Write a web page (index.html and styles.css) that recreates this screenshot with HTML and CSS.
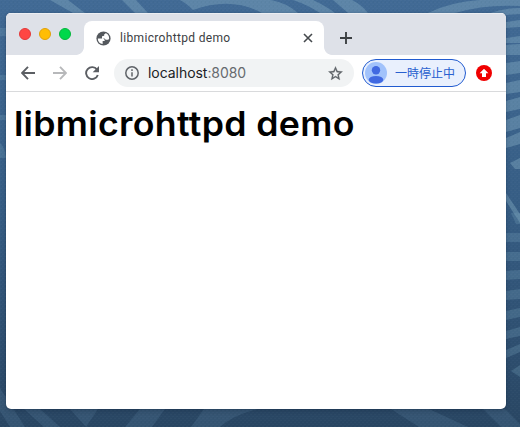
FILE: index.html
```html
<!DOCTYPE html>
<html lang="ja">
<head>
<meta charset="utf-8">
<title>libmicrohttpd demo</title>
<link rel="stylesheet" href="styles.css">
</head>
<body>
<svg class="wallpaper" viewBox="0 0 520 427" aria-hidden="true">
  <defs>
    <linearGradient id="sea" x1="0" y1="0" x2="0" y2="1">
      <stop offset="0" stop-color="#416a95"/><stop offset=".5" stop-color="#365d84"/><stop offset="1" stop-color="#294663"/>
    </linearGradient>
    <pattern id="weave" width="4" height="4" patternUnits="userSpaceOnUse">
      <path d="M0 .5h2M2 2.5h2" stroke="#fff" stroke-opacity=".02"/>
      <path d="M1.5 1v2" stroke="#00122a" stroke-opacity=".03"/>
    </pattern>
  </defs>
  <rect width="520" height="427" fill="url(#sea)"/>
  <g fill="#82a9c0" fill-opacity=".43">
    <path d="M50 0h18l17 13H73zM122 0h14l12 13h-13zM180 0h91q16 3 27 13h-36Q231-4 193 10q-7-7-13-10zM293 0h20q13 6 22 13h-15Q308 5 293 0zM333 0h19q10 5 16 13h-20zM428 13Q450 2 480 0h40v6q-35-2-65 7zM490 13q15-5 30-5v6l-14 1z"/>
    <path d="M506 22l14-2v7l-14 1zM506 43h14v-7l-14 2zM506 45l14-1v11h-14zM506 63l14-2v12l-14 2zM506 83l14-3v12l-14 2zM506 101l14-4v12l-14 3zM506 120l14-5v13l-14 4zM506 138l14-6v12l-14 4zM510 163l10-5v11h-5zM506 193l14 21v9l-14-22z"/>
  </g>
  <g fill="#719bb7" fill-opacity=".3">
    <path d="M511 213h9v11h-4zM506 233h14v9h-14zM506 252h14v9h-14zM506 271l14-1v9l-14 1zM506 291l14-2v10l-14 1zM506 311l14-3v9l-14 3zM506 331l14-4v9l-14 3zM506 350l14-6v8l-14 6zM511 371l9-6v12zM0 28h6v8H0zM0 75h6v5H0zM0 115h6v5H0zM0 143q5 4 6 15H0z"/>
  </g>
  <g fill="#6b91b0" fill-opacity=".2">
    <path d="M0 388l25 39H10L0 411zM24 409h16l20 18H44zM70 409h28L86 427zM140 409h25l-13 18h-27zM204 409h54q-25 6-38 18h-29zM391 409h38l39 18h-49zM483 409h22l15 15v3h-19z"/>
  </g>
  <rect width="520" height="427" fill="url(#weave)"/>
</svg>
<main class="window">
  <header class="tabstrip">
    <div class="lights"><i class="close"></i><i class="minimize"></i><i class="maximize"></i></div>
    <div class="tab">
      <svg class="globe" viewBox="0 0 24 24"><path fill="#54585d" d="M12 2a10 10 0 1 0 0 20 10 10 0 0 0 0-20z"/><path fill="#fff" d="M4 12h6.4c2.6.1 3.4 1.5 3.3 3.6h-2.9v4.2C7 19.5 4 16.5 4 12zM14.6 4.4c3.4 1.2 5.5 4 5.4 7.6l-1.2 1.8h-3.6L13.4 12H9.9V8.7l3-.5.3-2.5 1.4-.2z"/></svg>
      <span class="title">libmicrohttpd demo</span>
      <svg class="x" viewBox="0 0 10 10"><path d="M1 1l8 8M9 1L1 9"/></svg>
    </div>
    <svg class="plus" viewBox="0 0 12 12"><path d="M6 0v12M0 6h12"/></svg>
  </header>
  <nav class="toolbar">
    <svg class="nav" viewBox="0 0 14 14"><path d="M14 7H1.2M7 .8L1 7l6 6.2"/></svg>
    <svg class="nav forward" viewBox="0 0 14 14"><path d="M0 7h12.8M7 .8L13 7l-6 6.2"/></svg>
    <svg class="nav reload" viewBox="0 0 14 14"><path d="M12 3.6A6 6 0 1 0 12.8 9"/><path class="solid" d="M14 0v6.3H7.7z"/></svg>
    <div class="address">
      <svg class="info" viewBox="0 0 14 14"><circle cx="7" cy="7" r="6.2"/><path d="M7 6.2v4.2M7 3.3v1.6"/></svg>
      <span class="url">localhost<span>:8080</span></span>
      <svg class="star" viewBox="0 0 24 24"><path d="M22 9.24l-7.19-.62L12 2 9.19 8.63 2 9.24l5.46 4.73L5.82 21 12 17.27 18.18 21l-1.63-7.03zM12 15.4l-3.76 2.27 1-4.28-3.32-2.88 4.38-.38L12 6.1l1.71 4.04 4.38.38-3.32 2.88 1 4.28z"/></svg>
    </div>
    <div class="profile">
      <svg viewBox="0 0 22 22"><circle cx="11" cy="11" r="11" fill="#a1c2fb"/><circle cx="11" cy="8.2" r="4.2" fill="#4169e1"/><ellipse cx="11" cy="17.8" rx="7.3" ry="3.8" fill="#4169e1"/></svg>
      <span>一時停止中</span>
    </div>
    <svg class="update" viewBox="0 0 16 16"><circle cx="8" cy="8" r="8" fill="#f00000"/><path fill="#fff" d="M8 3.7l4.4 4.5H10V12H6V8.2H3.6z"/></svg>
  </nav>
  <section class="page"><h1>libmicrohttpd demo</h1></section>
</main>
</body>
</html>
```

FILE: styles.css
```css
* { box-sizing: border-box; }
body { margin: 0; width: 520px; height: 427px; padding: 13px 14px 18px 6px; overflow: hidden; background: #345d86; }
svg { display: block; flex: none; }
.wallpaper { position: absolute; top: 0; left: 0; width: 520px; height: 427px; z-index: -1; }
.window { width: 500px; height: 396px; overflow: hidden; background: #fff; border-radius: 5px; box-shadow: 0 0 1px rgba(0,20,40,.55), 0 2px 5px rgba(0,20,40,.22); }
.tabstrip { display: flex; height: 42px; padding-left: 13px; background: #dee1e8; box-shadow: inset 0 1px #eceef2; }
.lights { display: flex; gap: 8px; padding-top: 15px; width: 65px; }
.lights i { width: 12px; height: 12px; border-radius: 50%; border: 1px solid; }
.lights .close { background: #ff4743; border-color: #e3393a; }
.lights .minimize { background: #ffbd05; border-color: #e2a109; }
.lights .maximize { background: #00d84b; border-color: #04b73c; }
.tab { position: relative; display: flex; align-items: center; width: 240px; height: 34px; margin-top: 8px; padding: 0 11px 0 12px; border-radius: 8px 8px 0 0; background: #fff; }
.tab::before, .tab::after { content: ""; position: absolute; bottom: 0; width: 8px; height: 8px; }
.tab::before { left: -8px; background: radial-gradient(circle at 0 0, transparent 7.5px, #fff 8.2px); }
.tab::after { right: -8px; background: radial-gradient(circle at 100% 0, transparent 7.5px, #fff 8.2px); }
.globe { width: 17px; height: 17px; margin-left: -1px; }
.title { flex: 1; margin-left: 8px; font: 12px/16px Roboto, sans-serif; letter-spacing: .33px; color: #3c4043; white-space: nowrap; }
.x { width: 10px; height: 10px; fill: none; stroke: #45494d; stroke-width: 1.6; }
.plus { width: 12px; height: 12px; margin: 19px 0 0 16px; stroke: #3c4043; stroke-width: 1.9; }
.toolbar { display: flex; align-items: center; height: 37px; padding-left: 15px; border-bottom: 1px solid #d9dadc; background: #fff; }
.nav { width: 14px; height: 14px; margin-right: 18px; fill: none; stroke: #5b5e63; stroke-width: 1.9; }
.nav.forward { stroke: #b7b8ba; }
.nav.reload { margin-right: 15px; }
.nav .solid { fill: #5b5e63; stroke: none; }
.address { display: flex; align-items: center; width: 240px; height: 28px; padding: 0 10px 0 11px; border-radius: 14px; background: #f1f3f4; }
.info { width: 14px; height: 14px; fill: none; stroke: #5f6368; stroke-width: 1.5; }
.url { flex: 1; margin-left: 9px; font: 14px/20px Inter, sans-serif; letter-spacing: -.05px; color: #202124; white-space: nowrap; }
.url span { color: #666a6e; }
.star { width: 17px; height: 17px; fill: #5f6368; stroke: #5f6368; stroke-width: .4; }
.profile { display: flex; align-items: center; gap: 8px; width: 104px; height: 28px; margin-left: 8px; padding-left: 2px; border: 1px solid #215bd0; border-radius: 14px; background: #e9f0fd; color: #2860cf; }
.profile svg { width: 22px; height: 22px; }
.profile span { font: 12px/18px "Noto Sans CJK JP", sans-serif; white-space: nowrap; }
.update { width: 16px; height: 16px; margin-left: 10px; }
.page { padding: 10px 8px; }
h1 { margin: 0; font: 600 34px/44px Inter, sans-serif; letter-spacing: .3px; color: #000; white-space: nowrap; transform: scaleX(1.05); transform-origin: 2px 0; }
```
